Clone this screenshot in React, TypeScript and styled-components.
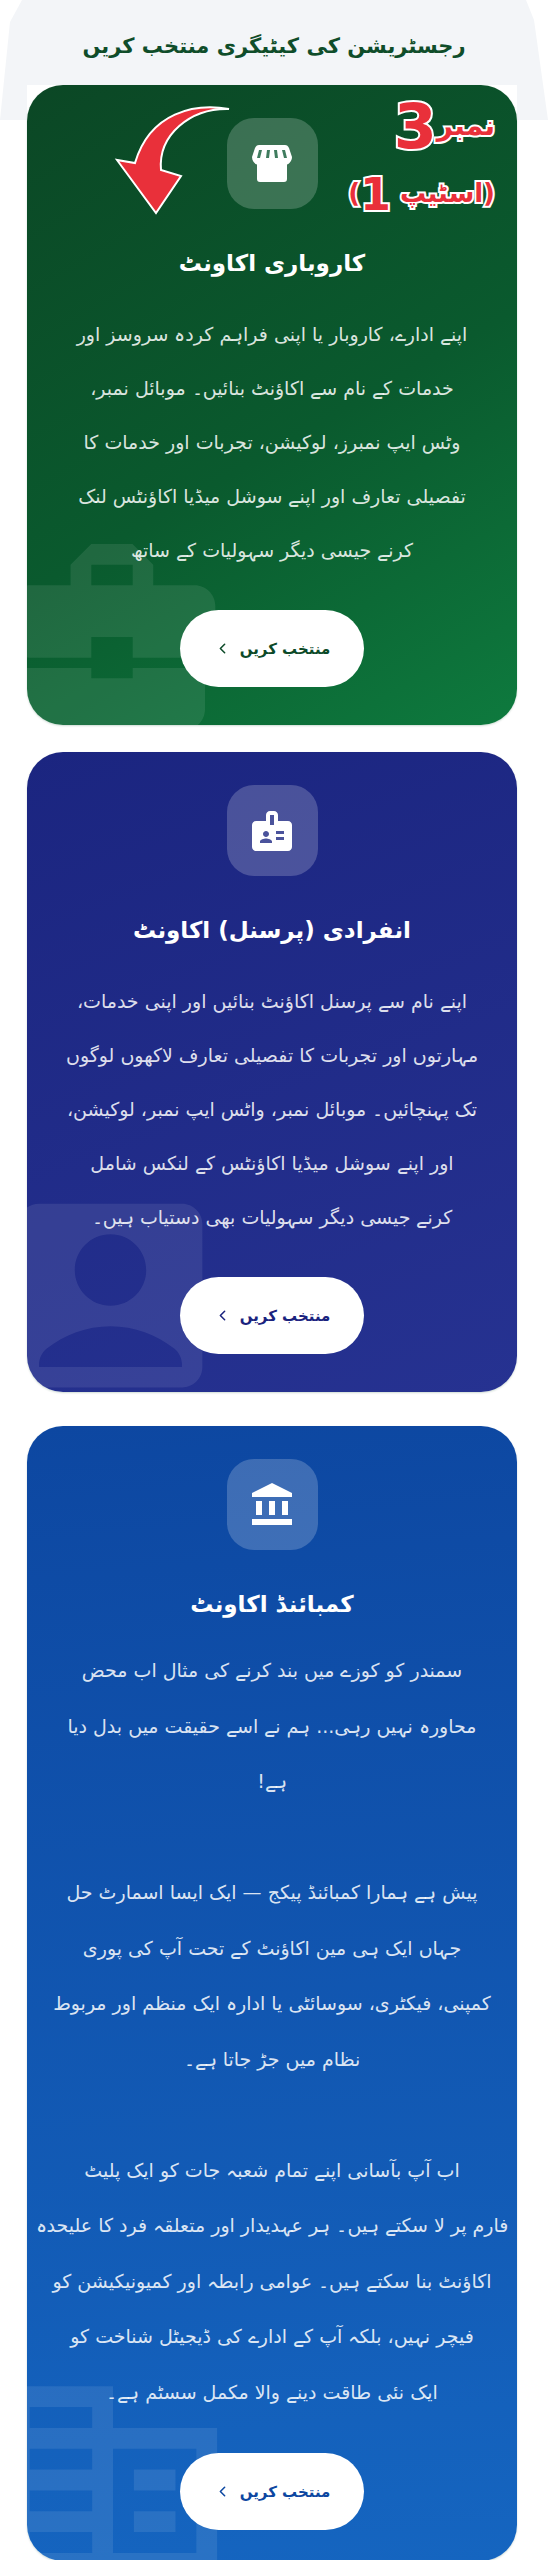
import { ChevronLeft } from "lucide-react";
import { ReactNode } from "react";
import { MdAccountBalance, MdAccountBox, MdBadge, MdBusinessCenter, MdCorporateFare } from "react-icons/md";
import styled, { createGlobalStyle } from "styled-components";


const URDU_FONT = `"DejaVu Sans", "Noto Sans", sans-serif`;

const GlobalStyle = createGlobalStyle`
    html, body {
        margin: 0;
        padding: 0;
        background: #ffffff;
        font-family: ${URDU_FONT};
    }
`;


function StoreIcon() {
    return (
        <svg width="40" height="37" viewBox="0 0 40 37" aria-hidden="true">
            <path fill="#ffffff" d="M7 0h26c2 0 3 1 4 3l3 9c0 4-3 7-5 7.500V34c0 2-1 3-3 3H8c-2 0-3-1-3-3V19.500C3 19 0 16 0 12l3-9c1-2 2-3 4-3z" />
            <path fill="#3f7c5e" d="M7 5h3l-2 8H5zM15 5h3l-1 8h-3zM22 5h3l1 8h-3zM30 5h3l2 8h-3z" />
        </svg>
    );
}


function StepArrow() {
    return (
        <ArrowSvg viewBox="0 0 130 120" aria-hidden="true">
            <path
                fill="#e9303a"
                stroke="#ffffff"
                strokeWidth="2"
                strokeLinejoin="miter"
                d="M119 9C85 3 40 12 25 63L7 60L46 113L71 76L51 70C48 35 80 8 119 9Z"
            />
        </ArrowSvg>
    );
}


interface AccountCardProps {
    background: string;
    accent: string;
    icon: ReactNode;
    watermark: ReactNode;
    title: string;
    body: string;
    $gap?: number;
    $lineHeight?: number;
    $bodyGap?: number;
    $tail?: number;
    $lift?: number;
    children?: ReactNode;
}


function AccountCard({ background, accent, icon, watermark, title, body, $gap = 0, $lineHeight = 54, $bodyGap = 14, $tail = 38, $lift = 36, children }: AccountCardProps) {
    return (
        <CardSlot $gap={$gap}>
            <Card $background={background} $tail={$tail}>
                <Watermark $lift={$lift}>{watermark}</Watermark>
                {children}
                <IconTile>{icon}</IconTile>
                <CardTitle>{title}</CardTitle>
                <CardBody $lineHeight={$lineHeight} $gap={$bodyGap}>{body}</CardBody>
                <SelectButton $accent={accent}>
                    <span>منتخب کریں</span>
                    <ChevronLeft size={17} strokeWidth={2.2} />
                </SelectButton>
            </Card>
        </CardSlot>
    );
}


export default function App() {
    return (
        <Page dir="rtl">
            <GlobalStyle />
            <Header>
                <HeaderTitle>رجسٹریشن کی کیٹیگری منتخب کریں</HeaderTitle>
            </Header>

            <CardList>
                <AccountCard
                    background="linear-gradient(150deg, #0b4725 0%, #0a5a2e 55%, #0e7a3e 100%)"
                    accent="#0c4a28"
                    icon={<StoreIcon />}
                    watermark={<MdBusinessCenter size={248} />}
                    title="کاروباری اکاونٹ"
                    body={`اپنے ادارے، کاروبار یا اپنی فراہم کردہ سروسز اور
خدمات کے نام سے اکاؤنٹ بنائیں۔ موبائل نمبر،
وٹس ایپ نمبرز، لوکیشن، تجربات اور خدمات کا
تفصیلی تعارف اور اپنے سوشل میڈیا اکاؤنٹس لنک
کرنے جیسی دیگر سہولیات کے ساتھ`}
                >
                    <StepArrow />
                    <StepNote>
                        <StepLine $size={28}>نمبر<StepDigit $size={62}>3</StepDigit></StepLine>
                        <StepLine $size={26}>(اسٹیپ <StepDigit $size={44}>1</StepDigit>)</StepLine>
                    </StepNote>
                </AccountCard>

                <AccountCard
                    background="linear-gradient(160deg, #1b2580 0%, #263291 100%)"
                    accent="#1a237e"
                    icon={<MdBadge size={48} />}
                    watermark={<MdAccountBox size={245} />}
                    title="انفرادی (پرسنل) اکاونٹ"
                    $gap={27}
                    $lift={26}
                    body={`اپنے نام سے پرسنل اکاؤنٹ بنائیں اور اپنی خدمات،
مہارتوں اور تجربات کا تفصیلی تعارف لاکھوں لوگوں
تک پہنچائیں۔ موبائل نمبر، واٹس ایپ نمبر، لوکیشن،
اور اپنے سوشل میڈیا اکاؤنٹس کے لنکس شامل
کرنے جیسی دیگر سہولیات بھی دستیاب ہیں۔`}
                />

                <AccountCard
                    background="linear-gradient(175deg, #0d47a1 0%, #1565c0 100%)"
                    accent="#0d47a1"
                    icon={<MdAccountBalance size={48} />}
                    watermark={<MdCorporateFare size={250} />}
                    title="کمبائنڈ اکاونٹ"
                    $gap={34}
                    $lineHeight={55.5}
                    $bodyGap={9}
                    $tail={31}
                    $lift={44}
                    body={`سمندر کو کوزے میں بند کرنے کی مثال اب محض
محاورہ نہیں رہی... ہم نے اسے حقیقت میں بدل دیا
ہے!

پیش ہے ہمارا کمبائنڈ پیکج — ایک ایسا اسمارٹ حل
جہاں ایک ہی مین اکاؤنٹ کے تحت آپ کی پوری
کمپنی، فیکٹری، سوسائٹی یا ادارہ ایک منظم اور مربوط
نظام میں جڑ جاتا ہے۔

اب آپ بآسانی اپنے تمام شعبہ جات کو ایک پلیٹ
فارم پر لا سکتے ہیں۔ ہر عہدیدار اور متعلقہ فرد کا علیحدہ
اکاؤنٹ بنا سکتے ہیں۔ عوامی رابطہ اور کمیونیکیشن کو
فیچر نہیں، بلکہ آپ کے ادارے کی ڈیجیٹل شناخت کو
ایک نئی طاقت دینے والا مکمل سسٹم ہے۔`}
                />
            </CardList>
        </Page>
    );
}


const Page = styled.div`
    position: relative;
    width: 548px;
    overflow: hidden;
    background: #ffffff;
`;

const Header = styled.header`
    position: relative;
    height: 85px;

    &::before {
        content: "";
        position: absolute;
        top: 0;
        left: 0;
        width: 548px;
        height: 120px;
        background: #f3f5f8;
        clip-path: polygon(22px 0, 526px 0, 534px 20px, 548px 120px, 0 120px, 10px 22px);
    }
`;

const HeaderTitle = styled.h1`
    position: relative;
    margin: 0;
    padding: 22px 0 0;
    width: 548px;
    text-align: center;
    font-size: 21px;
    line-height: 48px;
    font-weight: 700;
    color: #0f4d2a;
    white-space: nowrap;
`;

const CardList = styled.div`
    position: relative;
    display: flex;
    flex-direction: column;
    padding-right: 31px;
`;

const CardSlot = styled.div<{ $gap: number }>`
    width: 490px;
    margin-top: ${({ $gap }) => $gap}px;
    background: #ffffff;
`;

const Card = styled.section<{ $background: string; $tail: number }>`
    position: relative;
    display: flex;
    flex-direction: column;
    align-items: center;
    padding: 33px 0 ${({ $tail }) => $tail}px;
    border-radius: 36px;
    overflow: hidden;
    background: ${({ $background }) => $background};
    box-shadow: 0 1px 2px rgba(12, 74, 40, 0.2);
    color: #ffffff;
`;

const Watermark = styled.div<{ $lift: number }>`
    position: absolute;
    left: -39px;
    bottom: -${({ $lift }) => $lift}px;
    line-height: 0;
    color: rgba(255, 255, 255, 0.09);
`;

const IconTile = styled.div`
    position: relative;
    display: flex;
    align-items: center;
    justify-content: center;
    width: 91px;
    height: 91px;
    border-radius: 27px;
    background: rgba(255, 255, 255, 0.2);
    color: #ffffff;
`;

const CardTitle = styled.h2`
    position: relative;
    margin: 24px 0 0;
    height: 60px;
    text-align: center;
    font-size: 23px;
    line-height: 60px;
    font-weight: 700;
    color: #ffffff;
    white-space: nowrap;
`;

const CardBody = styled.p<{ $lineHeight: number; $gap: number }>`
    position: relative;
    margin: ${({ $gap }) => $gap}px 0 0;
    width: 100%;
    text-align: center;
    font-size: 19px;
    line-height: ${({ $lineHeight }) => $lineHeight}px;
    color: rgba(255, 255, 255, 0.86);
    white-space: pre;
`;

const SelectButton = styled.button<{ $accent: string }>`
    position: relative;
    display: flex;
    align-items: center;
    justify-content: center;
    gap: 9px;
    width: 184px;
    height: 77px;
    margin-top: 33px;
    border: 0;
    border-radius: 39px;
    background: #ffffff;
    color: ${({ $accent }) => $accent};
    font-family: ${URDU_FONT};
    font-size: 15px;
    font-weight: 700;
    padding: 0;
`;

const ArrowSvg = styled.svg`
    position: absolute;
    top: 15px;
    left: 83px;
    width: 130px;
    height: 120px;
`;

const StepNote = styled.div`
    position: absolute;
    top: 10px;
    right: 22px;
    display: flex;
    flex-direction: column;
    align-items: flex-start;
    gap: 4px;
    z-index: 1;
`;

const StepLine = styled.div<{ $size: number }>`
    font-size: ${({ $size }) => $size}px;
    line-height: 62px;
    font-weight: 700;
    color: #e9303a;
    white-space: nowrap;
    -webkit-text-stroke: 4px #ffffff;
    paint-order: stroke fill;
`;

const StepDigit = styled.span<{ $size: number }>`
    font-size: ${({ $size }) => $size}px;
    vertical-align: middle;
`;
